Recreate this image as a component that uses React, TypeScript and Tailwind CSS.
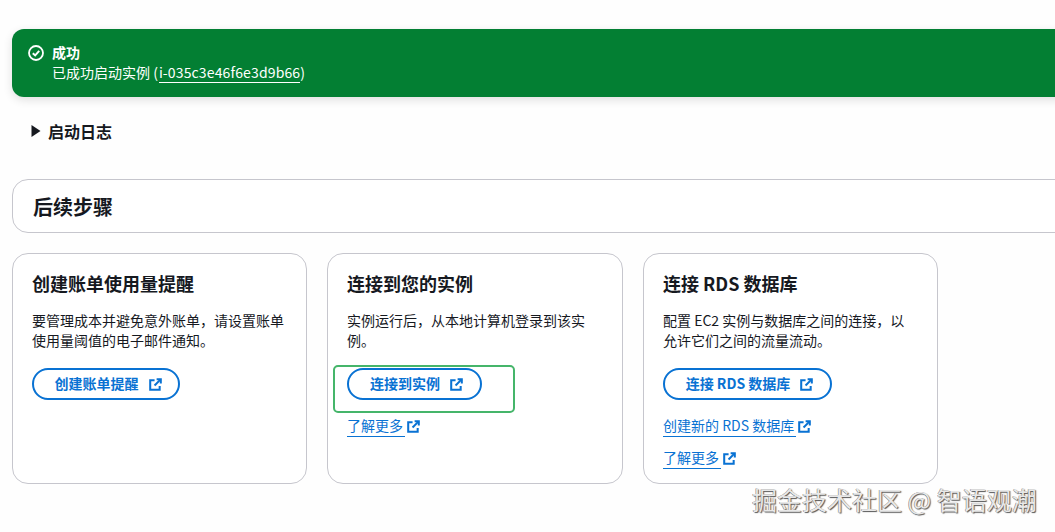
const F = '"Noto Sans CJK SC", "Noto Sans", sans-serif';

function Ext({ className = "" }: { className?: string }) {
  return (
    <svg viewBox="0 0 14 14" fill="none" stroke="currentColor" strokeWidth="2.2" className={`w-[13px] h-[13px] shrink-0 ${className}`}>
      <path d="M6 2.5H1.3v10.2H11.5V8.5" />
      <path d="M8.2 1.3h4.5v4.5" />
      <path d="M12.5 1.5 6 8" />
    </svg>
  );
}

function Btn({ label, w }: { label: string; w: string }) {
  return (
    <div className={`h-[32px] ${w} rounded-full border-2 border-[#0972d3] flex items-center justify-center gap-[9px] pl-[4px] text-[#0972d3] text-[14px] font-bold leading-none`}>
      <span className="-mt-[2px]">{label}</span>
      <Ext className="ml-[1px]" />
    </div>
  );
}

function Lnk({ label }: { label: string }) {
  return (
    <div className="flex items-center gap-[2px] text-[#0972d3] text-[14px] leading-[20px] h-[22px]">
      <span className="border-b border-[#0972d3] pr-[2px] h-[22px]">{label}</span>
      <Ext />
    </div>
  );
}

function Card({ title, desc, w, children }: { title: string; desc: string[]; w: string; children: React.ReactNode }) {
  return (
    <div className={`${w} h-[231px] rounded-[16px] border border-[#c6c6cd] bg-white px-[19px] pt-[16px]`}>
      <h3 className="text-[18px] font-bold leading-[26px] text-[#16191f]">{title}</h3>
      <p className="mt-[14px] text-[14px] leading-[20px] text-[#16191f]">
        {desc.map((d) => (
          <span key={d} className="block whitespace-nowrap">{d}</span>
        ))}
      </p>
      {children}
    </div>
  );
}

export default function App() {
  return (
    <div className="relative w-[1055px] h-[532px] overflow-hidden bg-[#fefefe] pl-[12px] pt-[29px]" style={{ fontFamily: F }}>
      <div className="w-[1060px] h-[68px] bg-[#037f33] rounded-l-[12px] shadow-[0_3px_10px_rgba(0,0,0,0.12)] text-white flex pl-[16px] pt-[13px] gap-[8px]">
        <svg viewBox="0 0 16 16" fill="none" stroke="currentColor" strokeWidth="1.8" className="w-[16px] h-[16px] mt-[3px] shrink-0">
          <circle cx="8" cy="8" r="7" />
          <path d="M4.8 8.2 7.2 10.4 11.2 5.8" strokeWidth="2" />
        </svg>
        <div className="text-[14px] leading-[20px]">
          <div className="font-bold">成功</div>
          <div className="whitespace-nowrap">
            已成功启动实例 (<span className="ml-[1px] tracking-[0.14px] border-b border-white">i-035c3e46f6e3d9b66</span>)
          </div>
        </div>
      </div>

      <div className="flex items-center mt-[23px] ml-[19px] h-[22px] gap-[7px] text-[16px] font-bold text-[#16191f]">
        <svg viewBox="0 0 10 12" className="w-[10px] h-[12px] fill-[#16191f]"><path d="M0.5 0 9.5 6 0.5 12z" /></svg>
        <span>启动日志</span>
      </div>

      <div className="mt-[37px] w-[1060px] h-[54px] rounded-l-[16px] border border-[#c6c6cd] bg-white flex items-center pl-[20px] pt-[1px] text-[20px] font-bold text-[#16191f]">
        后续步骤
      </div>

      <div className="mt-[20px] flex gap-[20px]">
        <Card w="w-[295px]" title="创建账单使用量提醒" desc={["要管理成本并避免意外账单，请设置账单", "使用量阈值的电子邮件通知。"]}>
          <div className="mt-[18px]"><Btn label="创建账单提醒" w="w-[148px]" /></div>
        </Card>
        <Card w="w-[296px]" title="连接到您的实例" desc={["实例运行后，从本地计算机登录到该实", "例。"]}>
          <div className="mt-[18px]"><Btn label="连接到实例" w="w-[135px]" /></div>
          <div className="mt-[15px]"><Lnk label="了解更多" /></div>
        </Card>
        <Card w="w-[295px]" title="连接 RDS 数据库" desc={["配置 EC2 实例与数据库之间的连接，以", "允许它们之间的流量流动。"]}>
          <div className="mt-[18px]"><Btn label="连接 RDS 数据库" w="w-[169px]" /></div>
          <div className="mt-[15px]"><Lnk label="创建新的 RDS 数据库" /></div>
          <div className="mt-[10px]"><Lnk label="了解更多" /></div>
        </Card>
      </div>

      <div className="absolute left-[333px] top-[365px] w-[182px] h-[48px] rounded-[5px] border-2 border-[#45b56a]" />
      <div className="absolute left-[752px] top-[484px] text-[25px] leading-[30px] whitespace-nowrap text-[#e8e8e8] [text-shadow:1px_1px_1px_#555,-0.5px_-0.5px_0.5px_#777]">
        掘金技术社区 @ 智语观潮
      </div>
    </div>
  );
}
